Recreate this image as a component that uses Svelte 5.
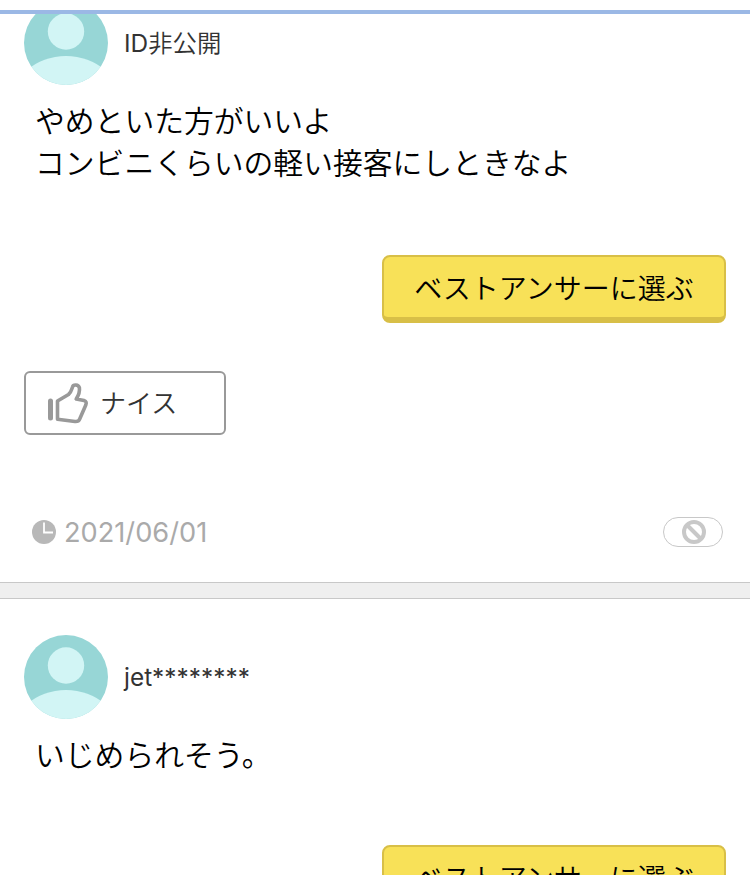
<script>
  const answers = [
    { id: 1, user: "ID非公開", lines: ["やめといた方がいいよ", "コンビニくらいの軽い接客にしときなよ"], date: "2021/06/01" },
    { id: 2, user: "jet********", lines: ["いじめられそう。"], date: null },
  ];
</script>

<main>
  <div class="topbar"></div>

  <div class="list">
    {#each answers as answer, i (answer.id)}
      <article class:first={i === 0}>
        <header>
          <svg class="avatar" viewBox="0 0 84 84">
            <clipPath id="face{answer.id}"><circle cx="42" cy="42" r="42" /></clipPath>
            <g clip-path="url(#face{answer.id})">
              <rect width="84" height="84" fill="#97d6d6" />
              <circle cx="42" cy="30.5" r="18.2" fill="#d2f5f5" />
              <ellipse cx="42" cy="105" rx="56" ry="50" fill="#d2f5f5" />
            </g>
          </svg>
          <span class="user">{answer.user}</span>
        </header>

        <div class="body">
          {#each answer.lines as line}
            <p>{line}</p>
          {/each}
        </div>

        <button class="best">ベストアンサーに選ぶ</button>

        {#if answer.date}
          <button class="nice">
            <svg viewBox="0 0 42 42" fill="none" stroke="#999" stroke-linejoin="round" stroke-linecap="round">
              <path d="M3.5 19V36" stroke-width="5" />
              <path
                d="M10.5 19L21.5 12.5C24 10.5 24.5 8 25.5 5C26.3 2.2 31.5 2.2 32.4 5.8C33 10 31.5 13.5 29.2 17L37 18.5C39.5 19.3 39.5 21 38.8 23L32.8 36.8C31.8 39.3 30.5 39.7 28 39.5L10.5 37.2Z"
                stroke-width="3.6"
              />
            </svg>
            <span>ナイス</span>
          </button>

          <footer>
            <svg class="clock" viewBox="0 0 24 24">
              <circle cx="12" cy="12" r="12" fill="#b8b8b8" />
              <path d="M12 2.5V12.5H21" fill="none" stroke="#fff" stroke-width="1.8" />
            </svg>
            <time>{answer.date}</time>
            <button class="report" aria-label="違反報告">
              <svg viewBox="0 0 24 24" fill="none" stroke="#c8c8c8" stroke-width="4">
                <circle cx="12" cy="12" r="10" />
                <path d="M5 5L19 19" />
              </svg>
            </button>
          </footer>
        {/if}
      </article>
    {/each}
  </div>
</main>

<style>
  :global(body) {
    background: #fff;
  }

  main {
    display: flow-root;
    height: 875px;
    overflow: hidden;
    font-family: Inter, "Noto Sans CJK JP DemiLight", "Noto Sans CJK JP", sans-serif;
    font-weight: 350;
    color: #000;
  }

  .topbar {
    height: 4px;
    margin-top: 10px;
    background: #9bb8e5;
  }

  .list {
    overflow: hidden;
  }

  article {
    display: flex;
    flex-direction: column;
    padding: 36px 24px 0;
  }

  article.first {
    margin-top: -49px;
    height: 581px;
    border-bottom: 1px solid #c8c8c8;
    box-shadow: 0 15px #efefef, 0 16px #c8c8c8;
    margin-bottom: 16px;
  }

  header {
    display: flex;
    align-items: center;
    gap: 16px;
    height: 84px;
  }

  .avatar {
    width: 84px;
    height: 84px;
  }

  .user {
    font-size: 24.4px;
    font-weight: 380;
    line-height: 36px;
    color: #333;
  }

  .body {
    padding: 15px 10px 0 11px;
    min-height: 111px;
  }

  .first .body {
    min-height: 155px;
  }

  p {
    margin: 0;
    font-size: 29.8px;
    line-height: 42px;
    white-space: nowrap;
  }

  button {
    padding: 0;
    font-family: inherit;
    font-weight: inherit;
    box-sizing: border-box;
  }

  .best {
    align-self: flex-end;
    flex: none;
    width: 344px;
    height: 68px;
    padding-top: 4px;
    border: 2px solid #d8bf47;
    border-bottom-width: 6px;
    border-radius: 8px;
    background: #f8e158;
    font-size: 28px;
    line-height: 56px;
    color: #000;
  }

  .nice {
    display: flex;
    align-items: center;
    gap: 11px;
    flex: none;
    width: 202px;
    height: 64px;
    margin-top: 48px;
    padding-left: 21px;
    border: 2px solid #999;
    border-radius: 6px;
    background: #fff;
    font-size: 26px;
    color: #333;
  }

  .nice svg {
    width: 42px;
    height: 42px;
  }

  .nice span {
    padding-bottom: 3px;
  }

  footer {
    display: flex;
    align-items: center;
    height: 36px;
    margin-top: 79px;
    padding: 0 3px 0 8px;
  }

  .clock {
    width: 24px;
    height: 24px;
    margin-right: 8px;
  }

  time {
    font-size: 27.2px;
    font-weight: 380;
    color: #aaa;
  }

  .report {
    display: flex;
    align-items: center;
    width: 60px;
    height: 30px;
    margin-left: auto;
    padding-left: 18px;
    border: 1px solid #c8c8c8;
    border-radius: 15px;
    background: #fff;
  }

  .report svg {
    width: 24px;
    height: 24px;
  }
</style>
